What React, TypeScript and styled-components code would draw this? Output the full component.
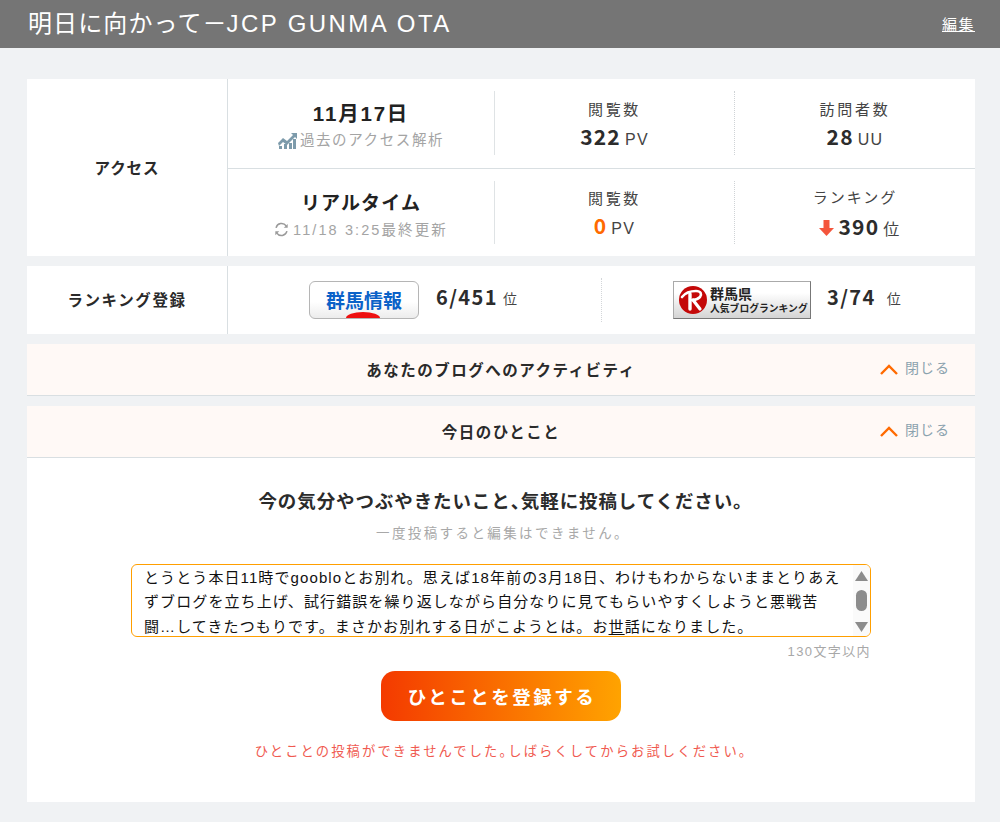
import React from "react";
import styled, { createGlobalStyle } from "styled-components";

const SANS = `"Liberation Sans", "Noto Sans CJK JP", sans-serif`;
const JP = `"Noto Sans CJK JP", "Liberation Sans", sans-serif`;

const Global = createGlobalStyle`
  html, body { margin: 0; padding: 0; background: #f0f2f4; }
  body { font-family: ${SANS}; color: #222; }
  * { box-sizing: border-box; }
`;

const Page = styled.div`
  width: 1000px;
  height: 822px;
  overflow: hidden;
`;
const Header = styled.header`
  height: 48px;
  background: #757575;
  display: flex;
  align-items: center;
  justify-content: space-between;
  padding: 0 25px 0 28px;
`;
const SiteTitle = styled.h1`
  margin: 0;
  font: 400 24px/1 ${SANS};
  letter-spacing: 1.1px;
  color: #fff;
`;
const TitleLatin = styled.span`
  letter-spacing: 2.4px;
  margin-left: -1px;
`;
const EditLink = styled.a`
  font: 400 15px/1 ${SANS};
  color: #fff;
  letter-spacing: 1.5px;
  text-decoration: underline;
`;
const Main = styled.main`
  padding: 31px 25px 0 27px;
  display: flex;
  flex-direction: column;
`;
const Card = styled.section<{ $h: number; $mb: number }>`
  display: grid;
  grid-template-columns: 201px 1fr;
  height: ${(p) => p.$h}px;
  margin-bottom: ${(p) => p.$mb}px;
  background: #fff;
`;
const RowHead = styled.div<{ $ls: number }>`
  display: flex;
  align-items: center;
  justify-content: center;
  border-right: 1px solid #d9dfe2;
  font: 700 15.5px/1 ${JP};
  letter-spacing: ${(p) => p.$ls}px;
  color: #2a2a2a;
`;
const Rows = styled.div`
  display: flex;
  flex-direction: column;
`;
const StatRow = styled.div<{ $first?: boolean }>`
  flex: ${(p) => (p.$first ? "0 0 90px" : "1")};
  display: grid;
  grid-template-columns: 267px 240px 1fr;
  padding: ${(p) => (p.$first ? "12px 0 13px" : "12px 0 12px")};
  border-bottom: ${(p) => (p.$first ? "1px solid #d9dfe2" : "none")};
`;
const Cell = styled.div<{ $divider?: "solid" | "dotted"; $pt: number }>`
  display: flex;
  flex-direction: column;
  align-items: center;
  justify-content: center;
  padding-top: ${(p) => p.$pt}px;
  border-right: ${(p) =>
    p.$divider === "solid"
      ? "1px solid #dfe3e5"
      : p.$divider === "dotted"
        ? "1px dotted #cfd3d6"
        : "none"};
`;
const DateText = styled.div<{ $size: number; $ls: number }>`
  font: 700 ${(p) => p.$size}px/26px ${SANS};
  letter-spacing: ${(p) => p.$ls}px;
  color: #222;
`;
const SubText = styled.div<{ $ls: number; $gap: number }>`
  display: flex;
  align-items: center;
  gap: ${(p) => p.$gap}px;
  font: 400 14.5px/22px ${SANS};
  letter-spacing: ${(p) => p.$ls}px;
  color: #a4a4a4;
  margin-top: 2px;
`;
const StatLabel = styled.div<{ $ls: number }>`
  font: 400 15px/20px ${SANS};
  letter-spacing: ${(p) => p.$ls}px;
  color: #444;
`;
const ValueLine = styled.div<{ $gap: number; $ml: number }>`
  display: flex;
  align-items: baseline;
  margin-top: ${(p) => p.$gap}px;
  margin-left: ${(p) => p.$ml}px;
`;
const Num = styled.span<{ $color?: string }>`
  font: 700 21px/24px ${JP};
  letter-spacing: 1.2px;
  color: ${(p) => p.$color || "#2c2c2c"};
`;
const Unit = styled.span`
  font: 400 16px/24px ${SANS};
  letter-spacing: 1.3px;
  color: #444;
  margin-left: 4px;
`;
const RankRow = styled.div`
  display: grid;
  grid-template-columns: 374px 1fr;
  align-items: center;
  height: 100%;
`;
const RankCell = styled.div<{ $divider?: boolean; $pl: number }>`
  height: 44px;
  display: flex;
  align-items: center;
  padding-left: ${(p) => p.$pl}px;
  border-right: ${(p) => (p.$divider ? "1px dotted #d3d6d9" : "none")};
`;
const RankNum = styled.span<{ $ml: number }>`
  font: 700 20px/1 ${JP};
  letter-spacing: 1.4px;
  color: #2c2c2c;
  margin-left: ${(p) => p.$ml}px;
  margin-top: -6px;
`;
const RankUnit = styled.span<{ $ml: number }>`
  font: 400 14px/1 ${SANS};
  color: #444;
  margin-left: ${(p) => p.$ml}px;
  margin-top: -2px;
`;
const BadgeOne = styled.div`
  position: relative;
  width: 110px;
  height: 38px;
  border: 1px solid #b5b5b5;
  border-radius: 6px;
  background: linear-gradient(#fff 55%, #ececec);
  overflow: hidden;
  display: flex;
  justify-content: center;
  font: 700 19px/36px ${JP};
  color: #0b62c8;
`;
const RedDome = styled.span`
  position: absolute;
  left: 36px;
  bottom: 0;
  width: 34px;
  height: 6px;
  background: #ee1010;
  border-radius: 17px 17px 0 0 / 6px 6px 0 0;
`;
const BadgeTwo = styled.div`
  width: 138px;
  height: 38px;
  border: 1px solid #777;
  border-top-color: #aaa;
  border-left-color: #aaa;
  background: linear-gradient(#fff 30%, #d4d4d4);
  display: flex;
  align-items: center;
  padding-left: 4px;
  gap: 2px;
  color: #222;
`;
const BadgeText = styled.div`
  display: flex;
  flex-direction: column;
`;
const BadgeBig = styled.span`
  font: 700 14px/16px ${SANS};
  color: #222;
`;
const BadgeSmall = styled.span`
  font: 700 9.8px/13px ${SANS};
  white-space: nowrap;
  color: #222;
`;
const Accordion = styled.div<{ $mb: number }>`
  position: relative;
  height: 52px;
  margin-bottom: ${(p) => p.$mb}px;
  background: #fff9f6;
  border-bottom: 1px solid #d9dfe2;
  display: flex;
  align-items: center;
  justify-content: center;
  font: 700 15.5px/1 ${JP};
  letter-spacing: 1.5px;
  color: #2a2a2a;
`;
const Toggle = styled.div`
  position: absolute;
  right: 25px;
  top: 15px;
  display: flex;
  align-items: center;
  gap: 7px;
  font: 400 14px/18px ${SANS};
  letter-spacing: 1px;
  color: #8ba2ae;
`;
const Panel = styled.section`
  height: 344px;
  background: #fff;
  display: flex;
  flex-direction: column;
  align-items: center;
  padding-top: 29px;
`;
const Lead = styled.h2`
  margin: 0;
  padding-left: 9px;
  font: 700 18.5px/26px ${JP};
  letter-spacing: 0.9px;
  color: #2b2b2b;
`;
const HalfMark = styled.span`
  font-feature-settings: "halt";
`;
const Note = styled.p`
  margin: 9px 0 0;
  padding-left: 4px;
  font: 400 13.5px/20px ${JP};
  letter-spacing: 2.4px;
  color: #a8a8a8;
`;
const Field = styled.div`
  margin-top: 22px;
  width: 740px;
  height: 73px;
  border: 1px solid #ff9f00;
  border-radius: 6px;
  display: grid;
  grid-template-columns: 1fr 17px;
  overflow: hidden;
  background: #fff;
`;
const FieldText = styled.div`
  padding: 1px 0 0 12px;
  height: 71px;
  overflow: hidden;
  font: 400 15px/24.4px ${SANS};
  letter-spacing: 1.1px;
  color: #111;
`;
const FieldLine = styled.div`
  white-space: pre;
  height: 24.4px;
`;
const Spell = styled.span`
  text-decoration: underline;
  text-underline-offset: 2px;
`;
const Scrollbar = styled.div`
  background: #fafafa;
  display: flex;
  flex-direction: column;
  align-items: center;
  justify-content: space-between;
  padding: 6px 1px 4px 0;
`;
const Thumb = styled.div`
  width: 11px;
  height: 21px;
  margin-bottom: 2px;
  border-radius: 6px;
  background: #8c8c8c;
`;
const Counter = styled.div`
  width: 740px;
  margin-top: 6px;
  text-align: right;
  font: 400 13px/18px ${SANS};
  letter-spacing: 1.4px;
  color: #a8a8a8;
`;
const SubmitButton = styled.button`
  margin-top: 10px;
  width: 240px;
  height: 50px;
  border: 0;
  border-radius: 14px;
  background: linear-gradient(90deg, #f43a00, #ffa300);
  color: #fff;
  font: 700 18.5px/50px ${JP};
  letter-spacing: 2.5px;
  padding: 0 0 0 2px;
`;
const ErrorText = styled.p`
  margin: 19px 0 0;
  padding-left: 7px;
  font: 400 13.3px/22px ${JP};
  letter-spacing: 2.1px;
  color: #f05a50;
`;

const Chevron = () => (
  <svg width="18" height="11" viewBox="0 0 18 11" style={{ marginTop: 3 }}>
    <path d="M1 10 L9 2 L17 10" fill="none" stroke="#ff6a00" strokeWidth="2.4" />
  </svg>
);
const ChartIcon = () => (
  <svg width="19" height="17" viewBox="0 0 19 17" fill="#7d9bab">
    <path d="M0 11l5-5 4 3 6-6-2-2h6v6l-2-2-8 8-4-3-4 4z" />
    <rect x="1" y="14" width="3" height="3" />
    <rect x="6" y="12" width="3" height="5" />
    <rect x="11" y="11" width="3" height="6" />
    <rect x="15" y="7" width="3" height="10" />
  </svg>
);
const SyncIcon = () => (
  <svg width="15" height="15" viewBox="0 0 16 16" fill="none" stroke="#9a9a9a" strokeWidth="1.6">
    <path d="M2.2 6.2A6 6 0 0 1 13 4.2" />
    <path d="M13.8 9.8A6 6 0 0 1 3 11.8" />
    <path d="M14.6 2v4.2h-4.2z" fill="#9a9a9a" stroke="none" />
    <path d="M1.4 14V9.8h4.2z" fill="#9a9a9a" stroke="none" />
  </svg>
);
const DownArrow = () => (
  <svg width="15" height="16" viewBox="0 0 15 16" style={{ marginRight: 4, alignSelf: "center" }}>
    <path d="M4.5 0h6v8H15l-7.5 8L0 8h4.5z" fill="#f4553c" />
  </svg>
);
const Tri = ({ down }: { down?: boolean }) => (
  <svg width="13" height="10" viewBox="0 0 13 10">
    <path d={down ? "M0 0h13L6.5 10z" : "M0 10h13L6.5 0z"} fill="#8c8c8c" />
  </svg>
);
const RLogo = () => (
  <svg width="30" height="30" viewBox="0 0 30 30">
    <circle cx="15" cy="15" r="14" fill="#c40808" />
    <g fill="none" stroke="#fff" strokeLinecap="round">
      <path d="M4 12C8 7 13 6 18 6c5 0 6 3 4 6-2 2-5 3-8 3" strokeWidth="2.6" />
      <path d="M12 9v15" strokeWidth="3.4" />
      <path d="M15 15l7 9" strokeWidth="3.2" />
    </g>
  </svg>
);

const Stat = ({
  label,
  children,
  divider,
  gap = 4,
  shift = 0,
  ls = 2.7,
}: {
  label: string;
  children: React.ReactNode;
  divider?: "solid" | "dotted";
  gap?: number;
  shift?: number;
  ls?: number;
}) => (
  <Cell $divider={divider} $pt={5}>
    <StatLabel $ls={ls}>{label}</StatLabel>
    <ValueLine $gap={gap} $ml={shift}>{children}</ValueLine>
  </Cell>
);

export default function App() {
  return (
    <Page>
      <Global />
      <Header>
        <SiteTitle>
          明日に向かって－<TitleLatin>JCP GUNMA OTA</TitleLatin>
        </SiteTitle>
        <EditLink>編集</EditLink>
      </Header>
      <Main>
        <Card $h={177} $mb={10}>
          <RowHead $ls={0.9}>アクセス</RowHead>
          <Rows>
            <StatRow $first>
              <Cell $divider="solid" $pt={6}>
                <DateText $size={20.5} $ls={1.8}>11月17日</DateText>
                <SubText $ls={1.6} $gap={3}><ChartIcon />過去のアクセス解析</SubText>
              </Cell>
              <Stat label="閲覧数" divider="dotted"><Num>322</Num><Unit>PV</Unit></Stat>
              <Stat label="訪問者数"><Num>28</Num><Unit>UU</Unit></Stat>
            </StatRow>
            <StatRow>
              <Cell $divider="solid" $pt={6}>
                <DateText $size={19} $ls={1.1}>リアルタイム</DateText>
                <SubText $ls={2.1} $gap={4}><SyncIcon />11/18 3:25最終更新</SubText>
              </Cell>
              <Stat label="閲覧数" divider="dotted"><Num $color="#ff6a00">0</Num><Unit>PV</Unit></Stat>
              <Stat label="ランキング" gap={6} shift={10} ls={2}><DownArrow /><Num>390</Num><Unit>位</Unit></Stat>
            </StatRow>
          </Rows>
        </Card>
        <Card $h={68} $mb={10}>
          <RowHead $ls={1.6}>ランキング登録</RowHead>
          <RankRow>
            <RankCell $divider $pl={81}>
              <BadgeOne>群馬情報<RedDome /></BadgeOne>
              <RankNum $ml={17}>6/451</RankNum>
              <RankUnit $ml={5}>位</RankUnit>
            </RankCell>
            <RankCell $pl={71}>
              <BadgeTwo>
                <RLogo />
                <BadgeText>
                  <BadgeBig>群馬県</BadgeBig>
                  <BadgeSmall>人気ブログランキング</BadgeSmall>
                </BadgeText>
              </BadgeTwo>
              <RankNum $ml={16}>3/74</RankNum>
              <RankUnit $ml={11}>位</RankUnit>
            </RankCell>
          </RankRow>
        </Card>
        <Accordion $mb={10}>
          あなたのブログへのアクティビティ
          <Toggle><Chevron />閉じる</Toggle>
        </Accordion>
        <Accordion $mb={0}>
          今日のひとこと
          <Toggle><Chevron />閉じる</Toggle>
        </Accordion>
        <Panel>
          <Lead>今の気分やつぶやきたいこと<HalfMark>、</HalfMark>気軽に投稿してください。</Lead>
          <Note>一度投稿すると編集はできません。</Note>
          <Field>
            <FieldText>
              <FieldLine>とうとう本日11時でgoobloとお別れ。思えば18年前の3月18日、わけもわからないままとりあえ</FieldLine>
              <FieldLine>ずブログを立ち上げ、試行錯誤を繰り返しながら自分なりに見てもらいやすくしようと悪戦苦</FieldLine>
              <FieldLine>闘…してきたつもりです。まさかお別れする日がこようとは。お<Spell>世</Spell>話になりました。</FieldLine>
            </FieldText>
            <Scrollbar>
              <Tri />
              <Thumb />
              <Tri down />
            </Scrollbar>
          </Field>
          <Counter>130文字以内</Counter>
          <SubmitButton>ひとことを登録する</SubmitButton>
          <ErrorText>ひとことの投稿ができませんでした<HalfMark>。</HalfMark>しばらくしてからお試しください。</ErrorText>
        </Panel>
      </Main>
    </Page>
  );
}
